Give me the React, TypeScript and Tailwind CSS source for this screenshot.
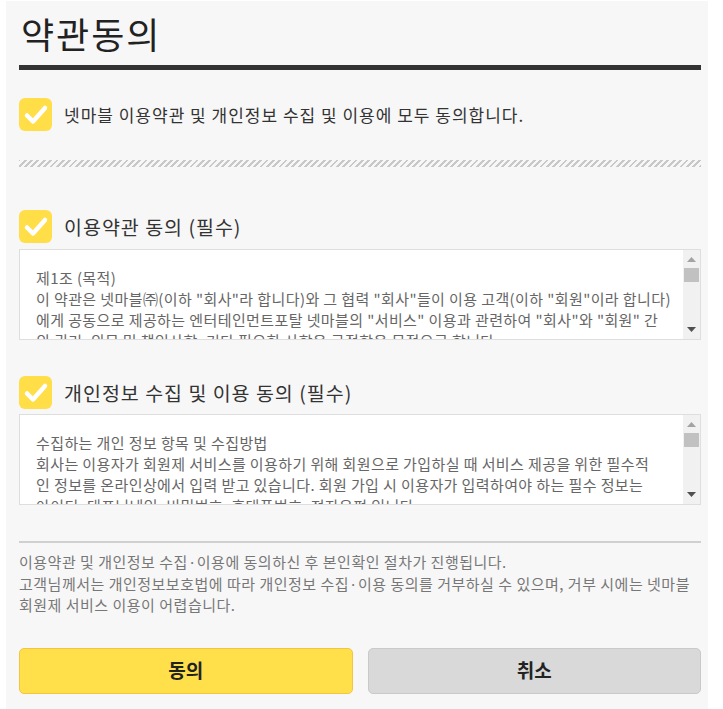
import React from 'react';

const font = { fontFamily: '"Noto Sans CJK KR", "Noto Sans", sans-serif' };

const CheckBox = () => (
  <span className="flex h-[33px] w-[33px] shrink-0 items-center justify-center rounded-[6px] bg-[#ffde48]">
    <svg width="33" height="33" viewBox="0 0 33 33" fill="none">
      <path d="M8 17.5 L14 23.5 L26 10" stroke="#ffffff" strokeWidth="4.5" strokeLinecap="round" strokeLinejoin="round" />
    </svg>
  </span>
);

// native scrollbars are hidden in the capture, so the bar is drawn by hand
const ScrollBar = () => (
  <div className="flex w-[17px] shrink-0 flex-col items-center bg-[#f1f1f1]">
    <svg className="mt-[7px]" width="9" height="5" viewBox="0 0 9 5">
      <path d="M0 5 L4.5 0 L9 5 Z" fill="#a3a3a3" />
    </svg>
    <div className="mt-[6px] h-[14px] w-[15px] bg-[#c1c1c1]" />
    <div className="flex-1" />
    <svg className="mb-[7px]" width="9" height="5" viewBox="0 0 9 5">
      <path d="M0 0 L9 0 L4.5 5 Z" fill="#505050" />
    </svg>
  </div>
);

const TermsBox = ({ children }: { children: React.ReactNode }) => (
  <div className="flex h-[91px] border border-[#dedede] bg-white">
    <div className="flex-1 overflow-hidden pl-[16px] pr-[2px] pt-[17px] text-[15px] leading-[21px] tracking-[0.4px] text-[#666]">
      {children}
    </div>
    <ScrollBar />
  </div>
);

const App = () => {
  return (
    <div className="min-h-screen bg-white pl-[6px] pr-[15px] pt-px" style={font}>
      <div className="min-h-[708px] bg-[#f7f7f7] pb-[14px] pl-[13px] pr-[7px]">
        <h1 className="pl-[2px] pt-[10px] text-[36px] font-normal leading-[44px] tracking-[2px] text-[#222]">약관동의</h1>
        <div className="mt-[10px] h-[5px] bg-[#333]" />

        <label className="mt-[28px] flex items-center gap-[12px]">
          <CheckBox />
          <span className="text-[17px] tracking-[1px] text-[#333]">넷마블 이용약관 및 개인정보 수집 및 이용에 모두 동의합니다.</span>
        </label>

        <div className="mt-[29px] h-[7px] bg-[repeating-linear-gradient(-45deg,#c8c8c8_0px,#c8c8c8_2px,transparent_2px,transparent_4.5px)]" />

        <label className="mt-[43px] flex items-center gap-[12px]">
          <CheckBox />
          <span className="text-[19.5px] tracking-[1px] text-[#333]">이용약관 동의 (필수)</span>
        </label>
        <div className="mt-[6px]">
          <TermsBox>
            <p>제1조 (목적)</p>
            <p>
              이 약관은 넷마블㈜(이하 "회사"라 합니다)와 그 협력 "회사"들이 이용 고객(이하 "회원"이라 합니다)
              <br />
              에게 공동으로 제공하는 엔터테인먼트포탈 넷마블의 "서비스" 이용과 관련하여 "회사"와 "회원" 간
              <br />
              의 권리, 의무 및 책임사항, 기타 필요한 사항을 규정함을 목적으로 합니다.
            </p>
            <p className="mt-[21px]">제2조 (정의)</p>
            <p>
              이 약관에서 사용하는 용어의 정의는 다음과 같습니다. "서비스"라 함은 구현되는 단말기와 상관없이 "회원"이 이용할 수 있는 넷마블 및 관련 제반 서비스를 의미합니다.
            </p>
          </TermsBox>
        </div>

        <label className="mt-[36px] flex items-center gap-[12px]">
          <CheckBox />
          <span className="text-[19.5px] tracking-[1px] text-[#333]">개인정보 수집 및 이용 동의 (필수)</span>
        </label>
        <div className="mt-[5px]">
          <TermsBox>
            <p>수집하는 개인 정보 항목 및 수집방법</p>
            <p>
              회사는 이용자가 회원제 서비스를 이용하기 위해 회원으로 가입하실 때 서비스 제공을 위한 필수적
              <br />
              인 정보를 온라인상에서 입력 받고 있습니다. 회원 가입 시 이용자가 입력하여야 하는 필수 정보는
              <br />
              아이디, 대표닉네임, 비밀번호, 휴대폰번호, 전자우편 입니다.
            </p>
            <p className="mt-[21px]">개인정보의 수집 및 이용목적</p>
            <p>
              회사는 수집한 개인정보를 회원 관리, 본인확인, 서비스 제공 및 고지사항 전달에 이용합니다.
            </p>
          </TermsBox>
        </div>

        <div className="mt-[36px] h-[2px] bg-[#d0d0d0]" />
        <p className="mt-[8px] text-[15px] leading-[21.5px] tracking-[0.5px] text-[#777]">
          이용약관 및 개인정보 수집·이용에 동의하신 후 본인확인 절차가 진행됩니다.
          <br />
          고객님께서는 개인정보보호법에 따라 개인정보 수집·이용 동의를 거부하실 수 있으며, 거부 시에는 넷마블
          <br />
          회원제 서비스 이용이 어렵습니다.
        </p>

        <div className="mt-[32px] grid grid-cols-2 gap-[15px]">
          <button className="h-[46px] rounded-[5px] border border-[#f5c542] bg-[#ffe04a] text-[19px] font-bold text-[#222]">
            동의
          </button>
          <button className="h-[46px] rounded-[5px] border border-[#c9c9c9] bg-[#d9d9d9] text-[19px] font-bold text-[#222]">
            취소
          </button>
        </div>
      </div>
    </div>
  );
};

export default App;
